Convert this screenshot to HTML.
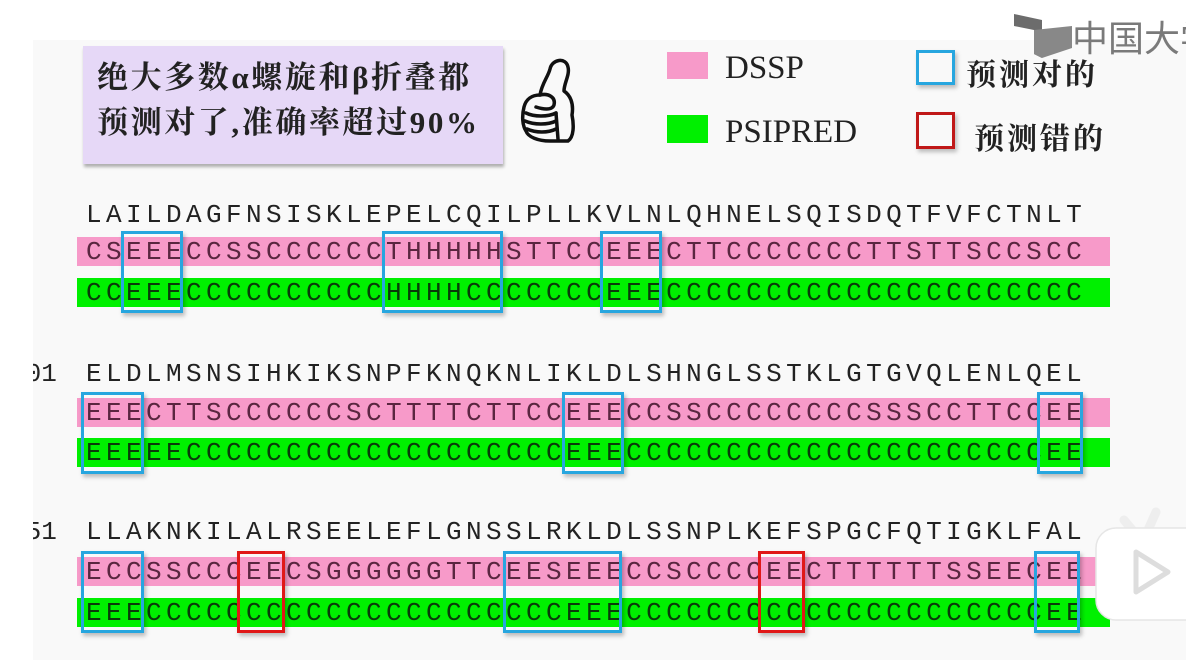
<!DOCTYPE html>
<html><head><meta charset="utf-8"><style>
*{margin:0;padding:0}
body{width:1186px;height:660px;overflow:hidden;background:#fff;position:relative;font-family:"Liberation Serif","Noto Serif CJK SC",serif}
.slide{position:absolute;left:33px;top:40px;width:1153px;height:620px;background:#f9f9f9}
.a{position:absolute}
.seq{position:absolute;left:86px;font-family:"Liberation Mono",monospace;font-size:26px;letter-spacing:4.4px;line-height:30px;color:#222;white-space:pre}
.bar{position:absolute;left:77px;width:1033px;height:29px}
.pk{background:#f79ac9}
.gr{background:#00f000}
.ps{color:#5a2640}
.gs{color:#0a3a0a}
.bx{position:absolute;border:3px solid #27a6df;box-shadow:2px 3px 4px rgba(0,0,0,.25)}
.rd{border-color:#e01818}
.num{position:absolute;font-family:"Liberation Mono",monospace;font-size:26px;color:#222;line-height:30px}
.cn{font-family:"Liberation Serif","Noto Serif CJK SC",serif}
</style></head><body>
<div class="slide"></div>
<!-- purple box -->
<div class="a" style="left:83px;top:46px;width:420px;height:118px;background:#e6d8f7;box-shadow:1px 3px 3px rgba(0,0,0,.3)"></div>
<div class="a cn" style="left:97px;top:55px;font-size:31px;line-height:45px;color:#222;letter-spacing:2.6px;white-space:nowrap;font-weight:bold">绝大多数α螺旋和β折叠都<br>预测对了,准确率超过90%</div>
<svg class="a" style="left:518px;top:55px" width="70" height="92" viewBox="0 0 70 92"><g fill="none" stroke="#111" stroke-width="3.5" stroke-linecap="round" stroke-linejoin="round">
<path d="M22 40 C24 28 30 22 32 14 C34 4 48 2 50 12 C52 20 46 28 46 36 C52 40 56 48 54 60 C56 70 56 82 50 86 L32 86 C20 86 10 82 8 76 C4 70 4 60 6 52 C8 44 14 40 22 40 Z"/>
<path d="M22 40 C30 38 38 42 36 50 C34 56 24 54 18 52"/>
<path d="M8 58 C16 62 30 62 38 58"/><path d="M7 66 C16 70 30 70 38 66"/><path d="M9 74 C18 78 30 78 38 74"/>
<path d="M38 58 L40 84"/></g></svg>
<!-- legend -->
<div class="a" style="left:667px;top:52px;width:41px;height:27px;background:#f79ac9"></div>
<div class="a" style="left:725px;top:50px;font-size:33px;color:#222">DSSP</div>
<div class="a" style="left:667px;top:115px;width:41px;height:28px;background:#00f000"></div>
<div class="a" style="left:725px;top:114px;font-size:33px;color:#222">PSIPRED</div>
<div class="bx" style="left:916px;top:50px;width:33px;height:29px"></div>
<div class="a cn" style="left:966px;top:50px;font-size:30px;color:#222;letter-spacing:3px;font-weight:bold">预测对的</div>
<div class="bx rd" style="left:916px;top:112px;width:33px;height:31px;border-color:#c01818"></div>
<div class="a cn" style="left:974px;top:114px;font-size:30px;color:#222;letter-spacing:3px;font-weight:bold">预测错的</div>
<!-- watermark -->
<svg class="a" style="left:1012px;top:12px" width="62" height="50" viewBox="0 0 62 50"><path d="M2 2 L30 8 L30 46 L22 42 L22 18 L2 14 Z" fill="#6c6c6c"/><path d="M22 18 L60 14 L60 36 L30 46 L22 42 Z" fill="#888"/></svg>
<div class="a" style="left:1072px;top:14px;font-family:'Noto Sans CJK SC',sans-serif;font-size:36px;color:#7a7a7a;line-height:44px;white-space:nowrap">中国大学</div>

<!-- row 1 -->
<div class="num" style="left:-10px;top:200px">1</div>
<div class="seq" style="top:200px">LAILDAGFNSISKLEPELCQILPLLKVLNLQHNELSQISDQTFVFCTNLT</div>
<div class="bar pk" style="top:237px"></div>
<div class="seq ps" style="top:237px">CSEEECCSSCCCCCCTHHHHHSTTCCEEECTTCCCCCCCTTSTTSCCSCC</div>
<div class="bar gr" style="top:278px"></div>
<div class="seq gs" style="top:278px">CCEEECCCCCCCCCCHHHHCCCCCCCEEECCCCCCCCCCCCCCCCCCCCC</div>
<div class="bx" style="left:121px;top:231px;width:56px;height:76px"></div>
<div class="bx" style="left:382px;top:231px;width:115px;height:76px"></div>
<div class="bx" style="left:600px;top:231px;width:56px;height:76px"></div>

<!-- row 2 -->
<div class="num" style="left:10px;top:359px">101</div>
<div class="seq" style="top:359px">ELDLMSNSIHKIKSNPFKNQKNLIKLDLSHNGLSSTKLGTGVQLENLQEL</div>
<div class="bar pk" style="top:398px"></div>
<div class="seq ps" style="top:398px">EEECTTSCCCCCCSCTTTTCTTCCEEECCSSCCCCCCCCSSSCCTTCCEE</div>
<div class="bar gr" style="top:438px"></div>
<div class="seq gs" style="top:438px">EEEEECCCCCCCCCCCCCCCCCCCEEECCCCCCCCCCCCCCCCCCCCCEE</div>
<div class="bx" style="left:81px;top:392px;width:57px;height:76px"></div>
<div class="bx" style="left:562px;top:392px;width:56px;height:76px"></div>
<div class="bx" style="left:1037px;top:392px;width:40px;height:76px"></div>

<!-- row 3 -->
<div class="num" style="left:10px;top:517px">151</div>
<div class="seq" style="top:517px">LLAKNKILALRSEELEFLGNSSLRKLDLSSNPLKEFSPGCFQTIGKLFAL</div>
<div class="bar pk" style="top:557px"></div>
<div class="seq ps" style="top:557px">ECCSSCCCEECSGGGGGGTTCEESEEECCSCCCCEECTTTTTTSSEECEE</div>
<div class="bar gr" style="top:598px"></div>
<div class="seq gs" style="top:598px">EEECCCCCCCCCCCCCCCCCCCCCEEECCCCCCCCCCCCCCCCCCCCCEE</div>
<div class="bx" style="left:81px;top:551px;width:57px;height:76px"></div>
<div class="bx rd" style="left:237px;top:551px;width:42px;height:76px"></div>
<div class="bx" style="left:503px;top:551px;width:113px;height:76px"></div>
<div class="bx rd" style="left:758px;top:551px;width:41px;height:76px"></div>
<div class="bx" style="left:1034px;top:551px;width:40px;height:76px"></div>

<div class="a" style="left:0;top:0;width:33px;height:660px;background:#fff"></div>
<!-- bilibili icon -->
<svg class="a" style="left:1094px;top:500px" width="92" height="125" viewBox="0 0 92 125"><g fill="#fff" stroke="#e6e6e6" stroke-width="1.5"><path d="M30 20 L40 32 M62 12 L54 30" stroke="#eee" stroke-width="9" stroke-linecap="round"/><rect x="2" y="28" width="110" height="92" rx="20"/></g><path d="M42 52 L42 92 L74 72 Z" fill="#fff" stroke="#ddd" stroke-width="5" stroke-linejoin="round"/></svg>
</body></html>
